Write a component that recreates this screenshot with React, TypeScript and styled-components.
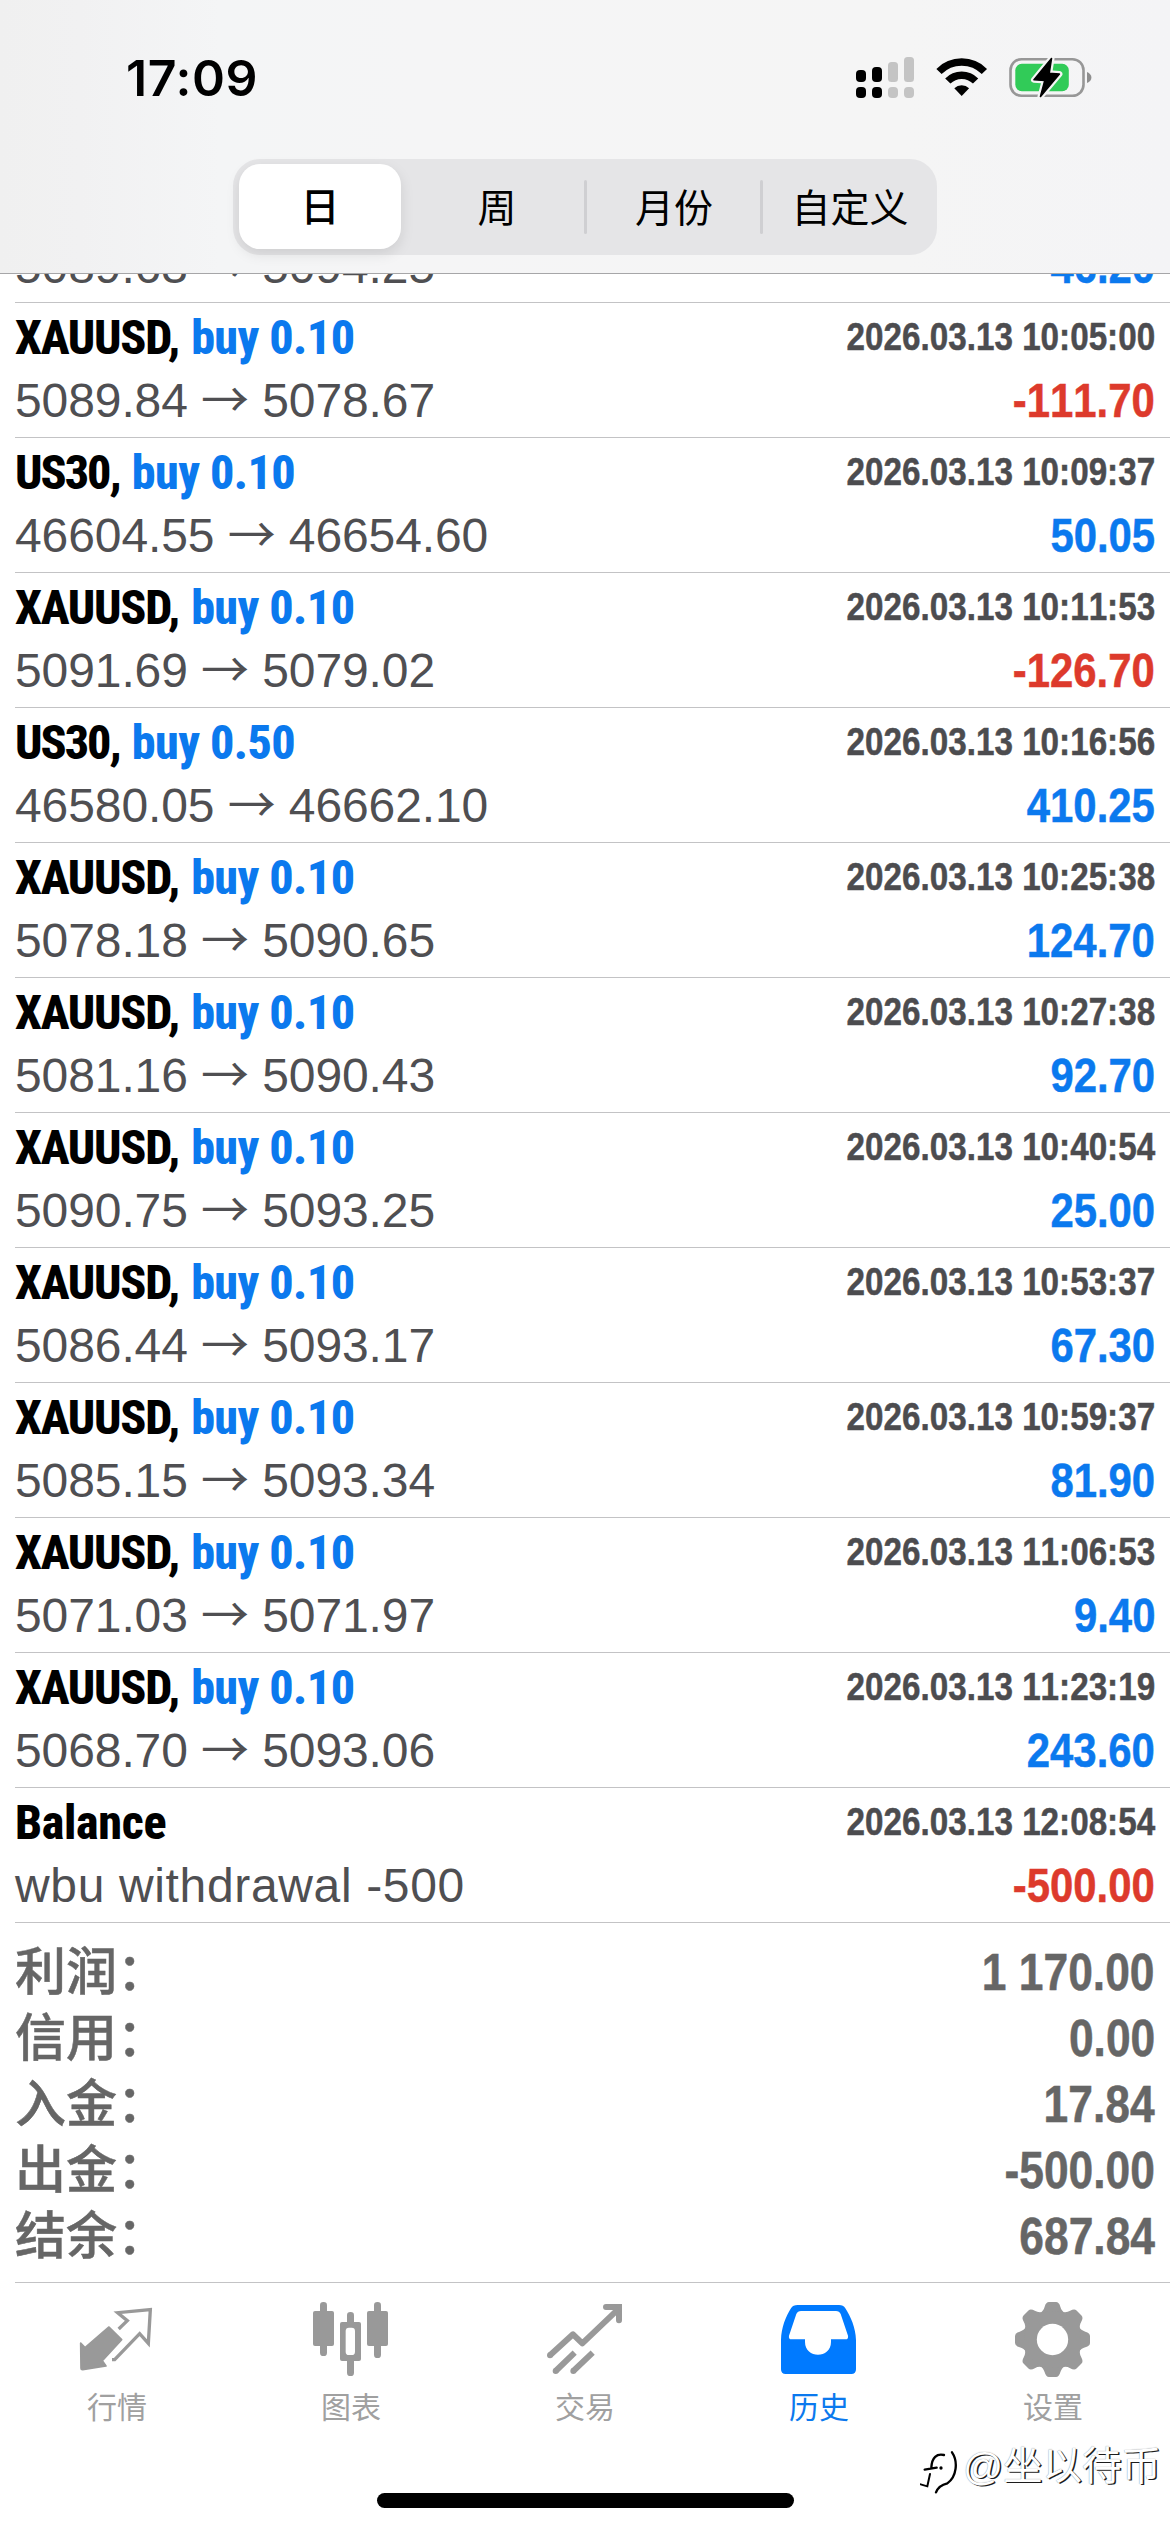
import React from 'react';
import styled, { createGlobalStyle, css } from 'styled-components';

const BLUE = '#0b79ee';
const RED = '#dd3a2c';
const GREY = '#999999';
const CONDENSED = 'Roboto, "Noto Sans CJK SC", sans-serif';
const REGULAR = '"Liberation Sans", "Noto Sans CJK SC", sans-serif';

const GlobalStyle = createGlobalStyle`
  * { box-sizing: border-box; }
  body { margin: 0; background: #fff; }
`;

const Screen = styled.div`
  position: relative;
  width: 1170px;
  height: 2532px;
  overflow: hidden;
  display: flex;
  flex-direction: column;
  background: #fff;
  font-family: ${REGULAR};
`;

/* ---------- header ---------- */

const Header = styled.header`
  flex: none;
  height: 274px;
  border-bottom: 1px solid #a6a6a8;
  background: linear-gradient(90deg, #f0f0f0 0, #f1f1f2 80px, #f4f5f6 220px, #f5f5f6 420px, #f5f5f5 900px, #f4f4f6 1170px);
  display: flex;
  flex-direction: column;
  align-items: center;
`;

const StatusBar = styled.div`
  align-self: stretch;
  height: 159px;
  padding: 48px 78px 0 126px;
  display: flex;
  justify-content: space-between;
  align-items: flex-start;
`;

const Clock = styled.time`
  font: 600 50px/60px Inter, sans-serif;
  letter-spacing: 0.6px;
  color: #000;
`;

const StatusIcons = styled.svg`
  width: 240px;
  height: 44px;
  margin-top: 7px;
  display: block;
`;

const Segmented = styled.nav`
  width: 704px;
  height: 96px;
  border-radius: 27px;
  background: #e5e5e7;
  display: grid;
  grid-template-columns: repeat(4, 1fr);
`;

const Segment = styled.button<{ $active?: boolean; $divided?: boolean }>`
  border: 0;
  padding: 3px 0 0;
  position: relative;
  display: flex;
  align-items: center;
  justify-content: center;
  color: #000;
  background: transparent;
  font: 400 39px/60px ${REGULAR};
  ${p => p.$active && css`
    margin: 5px 8px 6px 6px;
    border-radius: 21px;
    background: #fff;
    box-shadow: 0 5px 14px rgba(0, 0, 0, 0.1);
    font-weight: 500;
  `}
  ${p => p.$divided && css`
    padding-left: 2px;
    &::before {
      content: '';
      position: absolute;
      left: -1px;
      top: 21px;
      width: 3px;
      height: 54px;
      border-radius: 2px;
      background: #cfcfd2;
    }
  `}
`;

/* ---------- deals ---------- */

const List = styled.main`
  flex: none;
  height: 2008px;
  padding-left: 15px;
`;

const Deals = styled.ul`
  list-style: none;
  margin: 0;
  padding: 0;
`;

const DealRow = styled.li<{ $scrolledUnder?: boolean }>`
  height: ${p => (p.$scrolledUnder ? 29 : 135)}px;
  padding: 5px 15px 6px 0;
  border-bottom: 1px solid #c3c3c5;
  display: flex;
  flex-direction: column;
  justify-content: space-between;
  ${p => p.$scrolledUnder && css`
    overflow: hidden;
    padding-top: 0;
    padding-bottom: 5px;
    justify-content: flex-end;
  `}
`;

const Line = styled.div`
  flex: none;
  height: 60px;
  display: flex;
  justify-content: space-between;
  align-items: flex-start;
  white-space: nowrap;
`;

const Title = styled.div`
  font: 800 48px/60px ${CONDENSED};
  font-stretch: 75%;
  color: #000;
  display: flex;
  gap: 12px;
`;

const Symbol = styled.span<{ $tracking: number }>`
  letter-spacing: ${p => p.$tracking}px;
`;

const Action = styled.span`
  color: ${BLUE};
  letter-spacing: -0.55px;
`;

const Figures = styled.span`
  font-family: ${REGULAR};
  font-weight: 700;
  font-kerning: none;
  transform-origin: 100% 50%;
  -webkit-text-stroke: 0.5px currentColor;
`;

const When = styled(Figures)`
  font-size: 39px;
  line-height: 58px;
  transform: scaleX(0.852);
  color: #4c4c4f;
`;

const Prices = styled.div<{ $comment: boolean }>`
  font: 400 48px/60px ${REGULAR};
  letter-spacing: ${p => (p.$comment ? 0.65 : -0.1)}px;
  color: #4f4f52;
`;

const Arrow = styled.span`
  font-family: "Noto Sans CJK SC", sans-serif;
  font-weight: 400;
  line-height: 1px;
`;

const Profit = styled(Figures)<{ $loss: boolean }>`
  font-size: 48px;
  line-height: 60px;
  transform: scaleX(0.872);
  color: ${p => (p.$loss ? RED : BLUE)};
`;

/* ---------- totals ---------- */

const Totals = styled.dl`
  margin: 0;
  padding: 17px 15px 0 0;
`;

const TotalRow = styled.div`
  height: 66px;
  display: flex;
  justify-content: space-between;
  color: #666;
`;

const TotalLabel = styled.dt`
  font: 500 51px/66px ${REGULAR};
  -webkit-text-stroke: 0.5px currentColor;
`;

const TotalValue = styled.dd`
  margin: 0;
  font: 700 51px/66px ${REGULAR};
  font-kerning: none;
  transform: scaleX(0.87);
  transform-origin: 100% 50%;
  -webkit-text-stroke: 0.5px currentColor;
`;

/* ---------- tab bar ---------- */

const TabBar = styled.nav`
  flex: none;
  padding-top: 16px;
  height: 211px;
  display: grid;
  grid-template-columns: repeat(5, 1fr);
  background: linear-gradient(#c3c3c5, #c3c3c5) 15px 0 / 1155px 1px no-repeat;
`;

const Tab = styled.a<{ $active?: boolean }>`
  display: flex;
  flex-direction: column;
  align-items: center;
  color: ${p => (p.$active ? '#007aff' : GREY)};
`;

const TabIcon = styled.svg`
  width: 80px;
  height: 80px;
  display: block;
`;

const TabLabel = styled.span<{ $active?: boolean }>`
  margin-top: 9px;
  font: 400 30px/42px ${REGULAR};
  color: ${p => (p.$active ? BLUE : '#a0a0a0')};
`;

const HomeIndicator = styled.div`
  flex: none;
  align-self: center;
  width: 417px;
  height: 15px;
  border-radius: 8px;
  background: #000;
`;

const Watermark = styled.div`
  position: absolute;
  right: 9px;
  top: 2437px;
  display: flex;
  align-items: center;
  gap: 5px;
  color: #fff;
  font: 400 39.5px/58px ${REGULAR};
  text-shadow: 1.5px 1px 0 #1c1c1c, 0 0 1px rgba(0, 0, 0, 0.55);
`;

const WatermarkLogo = styled.svg`
  width: 38px;
  height: 44px;
  margin-top: 12px;
  display: block;
`;

/* ---------- data ---------- */

type Deal = { symbol?: string; action?: string; time?: string; from: string; to?: string; profit: string };

const deals: Deal[] = [
  { from: '5089.63', to: '5094.25', profit: '46.20' },
  { symbol: 'XAUUSD,', action: 'buy 0.10', time: '2026.03.13 10:05:00', from: '5089.84', to: '5078.67', profit: '-111.70' },
  { symbol: 'US30,', action: 'buy 0.10', time: '2026.03.13 10:09:37', from: '46604.55', to: '46654.60', profit: '50.05' },
  { symbol: 'XAUUSD,', action: 'buy 0.10', time: '2026.03.13 10:11:53', from: '5091.69', to: '5079.02', profit: '-126.70' },
  { symbol: 'US30,', action: 'buy 0.50', time: '2026.03.13 10:16:56', from: '46580.05', to: '46662.10', profit: '410.25' },
  { symbol: 'XAUUSD,', action: 'buy 0.10', time: '2026.03.13 10:25:38', from: '5078.18', to: '5090.65', profit: '124.70' },
  { symbol: 'XAUUSD,', action: 'buy 0.10', time: '2026.03.13 10:27:38', from: '5081.16', to: '5090.43', profit: '92.70' },
  { symbol: 'XAUUSD,', action: 'buy 0.10', time: '2026.03.13 10:40:54', from: '5090.75', to: '5093.25', profit: '25.00' },
  { symbol: 'XAUUSD,', action: 'buy 0.10', time: '2026.03.13 10:53:37', from: '5086.44', to: '5093.17', profit: '67.30' },
  { symbol: 'XAUUSD,', action: 'buy 0.10', time: '2026.03.13 10:59:37', from: '5085.15', to: '5093.34', profit: '81.90' },
  { symbol: 'XAUUSD,', action: 'buy 0.10', time: '2026.03.13 11:06:53', from: '5071.03', to: '5071.97', profit: '9.40' },
  { symbol: 'XAUUSD,', action: 'buy 0.10', time: '2026.03.13 11:23:19', from: '5068.70', to: '5093.06', profit: '243.60' },
  { symbol: 'Balance', time: '2026.03.13 12:08:54', from: 'wbu withdrawal -500', profit: '-500.00' },
];

const trackingFor: Record<string, number> = { 'XAUUSD,': -1.3, 'US30,': -2, Balance: -0.3 };

const totals = [
  ['利润：', '1 170.00'],
  ['信用：', '0.00'],
  ['入金：', '17.84'],
  ['出金：', '-500.00'],
  ['结余：', '687.84'],
];

/* ---------- icons ---------- */

const StatusGlyphs = () => (
  <StatusIcons viewBox="852 55 240 44">
    <g fill="#000">
      <rect x="856" y="70" width="10" height="12" rx="4" />
      <rect x="872" y="67" width="10" height="15" rx="4" />
      <rect x="856" y="87" width="10" height="11" rx="4" />
      <rect x="872" y="87" width="10" height="11" rx="4" />
    </g>
    <g fill="#c4c4c4">
      <rect x="888" y="62" width="10" height="20" rx="3.5" />
      <rect x="904" y="57" width="10" height="25" rx="3.5" />
      <rect x="888" y="87" width="10" height="11" rx="4" />
      <rect x="904" y="87" width="10" height="11" rx="4" />
    </g>
    <g fill="none" stroke="#000" strokeWidth="7.4">
      <path d="M939 71.5 A32 32 0 0 1 984.4 71.5" />
      <path d="M947.8 81 A19.5 19.5 0 0 1 975.6 81" />
    </g>
    <path d="M961.7 96 L954.3 88.3 A10.5 10.5 0 0 1 969.1 88.3 Z" fill="#000" />
    <rect x="1010.5" y="59.2" width="73" height="36.6" rx="11" fill="none" stroke="#979797" strokeWidth="2.6" />
    <rect x="1015.3" y="63.8" width="53.5" height="27.4" rx="6.5" fill="#31cb58" />
    <path d="M1087 72 Q1091.4 74 1091.4 77.5 Q1091.4 81 1087 83 Z" fill="#8e8e8e" />
    <path
      d="M1051.5 58.5 L1034 79.8 L1044.8 80.5 L1040.5 96.5 L1059.4 74 L1049.2 73.3 Z"
      fill="#000" stroke="#f5f5f5" strokeWidth="6" strokeLinejoin="round"
    />
    <path
      d="M1051.5 58.5 L1034 79.8 L1044.8 80.5 L1040.5 96.5 L1059.4 74 L1049.2 73.3 Z"
      fill="#000" stroke="#000" strokeWidth="1.6" strokeLinejoin="round"
    />
  </StatusIcons>
);

const QuotesIcon = () => (
  <TabIcon viewBox="51 54 240 240">
    <path
      d="M62 189 L75 203 L147 141 L185 179 L127 242 L138 258 L68 269 Q63 269 63 264 Z"
      fill="currentColor" stroke="currentColor" strokeWidth="5" strokeLinejoin="round"
    />
    <path
      d="M176 147 L202 122 L173 98 L271 89 L265 190 L239 161 L164 239 L156 239"
      fill="none" stroke="currentColor" strokeWidth="10"
    />
  </TabIcon>
);

const ChartIcon = () => (
  <TabIcon viewBox="753 54 240 240">
    <g fill="currentColor">
      <rect x="759" y="93" width="63" height="105" rx="6" />
      <rect x="780" y="66" width="21" height="162" rx="10" />
      <rect x="921" y="93" width="63" height="105" rx="6" />
      <rect x="942" y="66" width="21" height="168" rx="10" />
      <rect x="840" y="126" width="63" height="117" rx="6" />
      <rect x="861" y="96" width="21" height="192" rx="10" />
    </g>
    <rect x="857" y="143" width="28" height="82" rx="10" fill="#fff" />
  </TabIcon>
);

const TradeIcon = () => (
  <TabIcon viewBox="75 54 240 240">
    <g fill="none" stroke="currentColor" strokeWidth="18">
      <path d="M90 226 L159 163 L187 190 L294 88" strokeLinejoin="round" />
      <path d="M258 81 L297 81 L297 121" strokeLinecap="round" />
      <path d="M107 273 L164 218 M160 273 L218 218" />
    </g>
    <g fill="currentColor">
      <circle cx="90" cy="226" r="9" />
      <circle cx="107" cy="273" r="9" />
      <circle cx="160" cy="273" r="9" />
      <path d="M280 72 H306 V98 Z" />
    </g>
  </TabIcon>
);

const HistoryIcon = () => (
  <TabIcon viewBox="777 54 240 240">
    <path
      fill="currentColor" fillRule="evenodd"
      d="M833 75 H957 Q970 75 976 85 C992 110 1007 143 1008 180 V268 Q1008 282 994 282 H797 Q783 282 783 268 V180 C784 143 797 110 813 85 Q819 75 833 75 Z
         M843 93 Q833 93 829 102 L807 167 Q805 178 815 178 H855 V186 C855 237 933 237 933 186 V178 H976 Q986 178 984 167 L962 102 Q958 93 948 93 Z"
    />
  </TabIcon>
);

const teeth = [0, 45, 90, 135, 180, 225, 270, 315];

const SettingsIcon = () => (
  <TabIcon viewBox="339 54 240 240">
    <g fill="currentColor">
      {teeth.map(a => (
        <path
          key={a}
          transform={`rotate(${a} 457.5 178.5)`}
          d="M418 100 Q431 93 434 80 Q438 66 447 66 H468 Q477 66 481 80 Q484 93 497 100 V150 H418 Z"
        />
      ))}
    </g>
    <circle cx="457.5" cy="178.5" r="66" fill="none" stroke="currentColor" strokeWidth="38" />
    <circle cx="457.5" cy="178.5" r="47" fill="#fff" />
  </TabIcon>
);

const tabs = [
  { label: '行情', Icon: QuotesIcon },
  { label: '图表', Icon: ChartIcon },
  { label: '交易', Icon: TradeIcon },
  { label: '历史', Icon: HistoryIcon, active: true },
  { label: '设置', Icon: SettingsIcon },
];

export default function App() {
  return (
    <Screen>
      <GlobalStyle />
      <Header>
        <StatusBar>
          <Clock>17:09</Clock>
          <StatusGlyphs />
        </StatusBar>
        <Segmented>
          <Segment $active>日</Segment>
          <Segment>周</Segment>
          <Segment $divided>月份</Segment>
          <Segment $divided>自定义</Segment>
        </Segmented>
      </Header>

      <List>
        <Deals>
          {deals.map(d => (
            <DealRow key={d.from} $scrolledUnder={!d.symbol}>
              {d.symbol && (
                <Line>
                  <Title>
                    <Symbol $tracking={trackingFor[d.symbol]}>{d.symbol}</Symbol>
                    {d.action && <Action>{d.action}</Action>}
                  </Title>
                  <When>{d.time}</When>
                </Line>
              )}
              <Line>
                <Prices $comment={!d.to}>
                  {d.from}
                  {d.to && <> <Arrow>→</Arrow> {d.to}</>}
                </Prices>
                <Profit $loss={d.profit.startsWith('-')}>{d.profit}</Profit>
              </Line>
            </DealRow>
          ))}
        </Deals>
        <Totals>
          {totals.map(([label, value]) => (
            <TotalRow key={label}>
              <TotalLabel>{label}</TotalLabel>
              <TotalValue>{value}</TotalValue>
            </TotalRow>
          ))}
        </Totals>
      </List>

      <TabBar>
        {tabs.map(({ label, Icon, active }) => (
          <Tab key={label} $active={active}>
            <Icon />
            <TabLabel $active={active}>{label}</TabLabel>
          </Tab>
        ))}
      </TabBar>
      <HomeIndicator />

      <Watermark>
        <WatermarkLogo viewBox="48 510 114 132">
          <g fill="none" stroke="#000" strokeLinecap="round">
            <path d="M144 517 C163 545 158 590 130 610 Q104 616 96 637" strokeWidth="7" />
            <path d="M120 525 C98 520 84 532 82 562 M62 569 L98 563" strokeWidth="7" />
            <path d="M78 582 L70 619 L50 613" strokeWidth="6" />
          </g>
          <circle cx="111" cy="564" r="5" fill="#000" />
        </WatermarkLogo>
        @坐以待币
      </Watermark>
    </Screen>
  );
}
